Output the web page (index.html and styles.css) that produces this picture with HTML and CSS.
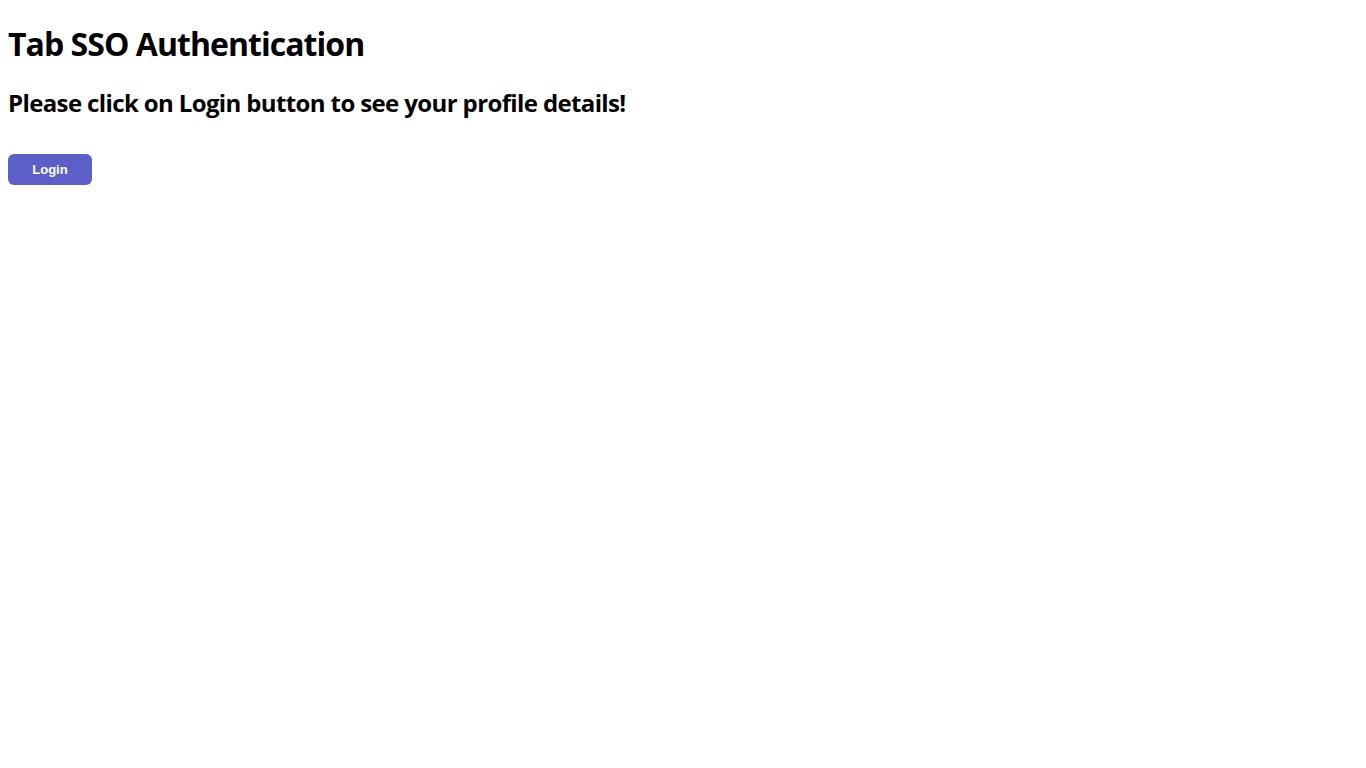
FILE: index.html
```html
<!DOCTYPE html>
<html lang="en">
<head>
<meta charset="utf-8">
<title>Tab SSO Authentication</title>
<link rel="stylesheet" href="styles.css">
</head>
<body>
<div class="page">
  <h1 class="title">Tab SSO Authentication</h1>
  <h2 class="subtitle">Please click on Login button to see your profile details!</h2>
  <button class="login-btn" type="button">Login</button>
</div>
</body>
</html>
```

FILE: styles.css
```css
html, body {
  margin: 0;
  padding: 0;
  background: #ffffff;
}

body {
  font-family: "Open Sans", "Noto Sans", sans-serif;
  color: #000000;
}

.page {
  padding: 24px 8px 0 8px;
  display: flex;
  flex-direction: column;
  align-items: flex-start;
}

.title {
  margin: 0;
  font-size: 32px;
  line-height: 40px;
  font-weight: 700;
  letter-spacing: -0.03em;
}

.subtitle {
  margin: 23px 0 0 0;
  font-size: 24px;
  line-height: 32px;
  font-weight: 700;
  letter-spacing: -0.026em;
}

.login-btn {
  margin-top: 35px;
  width: 84px;
  height: 31px;
  border: none;
  border-radius: 6px;
  background: #5b5fc7;
  color: #ffffff;
  font-family: "Liberation Sans", Arial, sans-serif;
  font-size: 13px;
  font-weight: 700;
  padding: 0;
  cursor: pointer;
}
```
